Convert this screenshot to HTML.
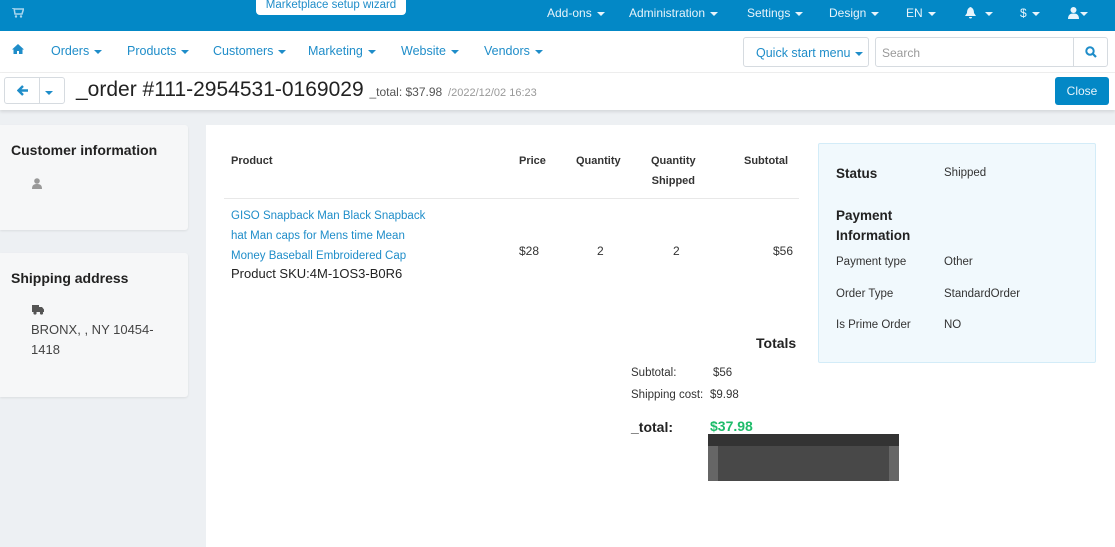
<!DOCTYPE html>
<html><head><meta charset="utf-8"><style>
*{box-sizing:border-box;margin:0;padding:0}
body{width:1115px;height:547px;overflow:hidden;background:#edf0f3;font-family:"Liberation Sans","DejaVu Sans",sans-serif;color:#333;position:relative;font-size:12px}
.abs{position:absolute;white-space:nowrap}
.top{position:absolute;left:0;top:0;width:1115px;height:31px;background:#0388c6}
.top .m{color:#e8f4fb;font-size:12px;top:6px}
.car{display:inline-block;border-left:4px solid transparent;border-right:4px solid transparent;border-top:4px solid currentColor;vertical-align:middle;margin-left:5px}
.nav{position:absolute;left:0;top:31px;width:1115px;height:42px;background:#fff;border-bottom:1px solid #eee}
.nav .m{color:#1f8dc9;font-size:12.5px;top:13px}
.tb{position:absolute;left:0;top:73px;width:1115px;height:37px;background:#fff;box-shadow:0 2px 3px rgba(0,0,0,.1)}
.card{position:absolute;left:0;width:188px;background:#f6f7f8;border-radius:0 3px 3px 0;box-shadow:0 1px 2px rgba(0,0,0,.08)}
.h{font-weight:bold;font-size:14px;color:#222}
.th{font-weight:bold;font-size:11px;color:#333;line-height:20px;text-align:center}
</style></head><body>
<div class="top">
<svg class="abs" style="left:12px;top:8px" width="12" height="10" viewBox="0 0 12 10"><path d="M0 0h2l1 6h7l1.5-5H3" fill="none" stroke="#a9d6ee" stroke-width="1.5"/><circle cx="4" cy="8.5" r="1.2" fill="#a9d6ee"/><circle cx="9" cy="8.5" r="1.2" fill="#a9d6ee"/></svg>
<div class="abs" style="left:256px;top:-4px;width:150px;height:19px;background:#fff;border-radius:4px;color:#1f8dc9;font-size:11.5px;text-align:center;padding-top:3px">Marketplace setup wizard</div>
<div class="abs m" style="left:547px">Add-ons<span class="car"></span></div>
<div class="abs m" style="left:629px">Administration<span class="car"></span></div>
<div class="abs m" style="left:747px">Settings<span class="car"></span></div>
<div class="abs m" style="left:829px">Design<span class="car"></span></div>
<div class="abs m" style="left:906px">EN<span class="car"></span></div>
<svg class="abs" style="left:965px;top:7px" width="11" height="12" viewBox="0 0 11 12"><path d="M5.5 0C3 1 2 3 2 6L0 9h11L9 6C9 3 8 1 5.5 0zM4 10h3a1.5 1.5 0 0 1-3 0z" fill="#e8f4fb"/></svg>
<div class="abs m" style="left:980px"><span class="car"></span></div>
<div class="abs m" style="left:1020px">$<span class="car"></span></div>
<svg class="abs" style="left:1068px;top:7px" width="11" height="12" viewBox="0 0 11 12"><circle cx="5.5" cy="3" r="3" fill="#e8f4fb"/><path d="M0 12c0-4 2-5.5 5.5-5.5S11 8 11 12z" fill="#e8f4fb"/></svg>
<div class="abs m" style="left:1075px"><span class="car"></span></div>
</div>
<div class="nav">
<svg class="abs" style="left:12px;top:13px" width="12" height="10" viewBox="0 0 12 10"><path d="M6 0L0 5.5h1.5V10h3.5V7h2v3h3.5V5.5H12z" fill="#1f8dc9"/></svg>
<div class="abs m" style="left:51px">Orders<span class="car"></span></div>
<div class="abs m" style="left:127px">Products<span class="car"></span></div>
<div class="abs m" style="left:213px">Customers<span class="car"></span></div>
<div class="abs m" style="left:308px">Marketing<span class="car"></span></div>
<div class="abs m" style="left:401px">Website<span class="car"></span></div>
<div class="abs m" style="left:484px">Vendors<span class="car"></span></div>
<div class="abs" style="left:743px;top:6px;width:126px;height:30px;border:1px solid #d6dbe0;border-radius:3px;color:#1f8dc9;font-size:12.5px;padding:8px 0 0 12px">Quick start menu<span class="car"></span></div>
<div class="abs" style="left:875px;top:6px;width:233px;height:30px;border:1px solid #d6dbe0;border-radius:3px;color:#999;padding:8px 0 0 6px">Search</div>
<div class="abs" style="left:1073px;top:6px;width:1px;height:30px;background:#d6dbe0"></div>
<svg class="abs" style="left:1085px;top:15px" width="12" height="12" viewBox="0 0 12 12"><circle cx="5" cy="5" r="3.7" fill="none" stroke="#1f8dc9" stroke-width="2"/><path d="M7.5 7.5l3.5 3.5" stroke="#1f8dc9" stroke-width="2.2"/></svg>
</div>
<div class="tb">
<div class="abs" style="left:4px;top:4px;width:61px;height:27px;border:1px solid #d6dbe0;border-radius:3px"></div>
<div class="abs" style="left:39px;top:4px;width:1px;height:27px;background:#d6dbe0"></div>
<svg class="abs" style="left:17px;top:12px" width="12" height="11" viewBox="0 0 12 11"><path d="M11 5.5H2M6 1L1.5 5.5 6 10" fill="none" stroke="#1f8dc9" stroke-width="2.4"/></svg>
<div class="abs" style="left:45px;top:12px;color:#1f8dc9"><span class="car" style="margin:0"></span></div>
<div class="abs" style="left:76px;top:5px;font-size:21px;color:#222">_order #111-2954531-0169029 <span style="font-size:12px;color:#555">_total: $37.98</span> <span style="font-size:11px;color:#999">/2022/12/02 16:23</span></div>
<div class="abs" style="left:1055px;top:4px;width:54px;height:28px;background:#0388c6;border-radius:3px;color:#e8f4fb;font-size:12px;text-align:center;padding-top:7px">Close</div>
</div>
<div class="card" style="top:125px;height:105px"><div class="abs h" style="left:11px;top:17px">Customer information</div>
<svg class="abs" style="left:32px;top:178px;top:53px" width="10" height="11" viewBox="0 0 10 11"><circle cx="5" cy="3" r="2.8" fill="#999"/><path d="M0 11c0-4 2-5 5-5s5 1 5 5z" fill="#999"/></svg></div>
<div class="card" style="top:253px;height:144px"><div class="abs h" style="left:11px;top:17px">Shipping address</div>
<svg class="abs" style="left:32px;top:52px" width="12" height="10" viewBox="0 0 12 10"><path d="M0 0h7v7H0zM7 2h3l2 2.5V7H7z" fill="#555"/><circle cx="3" cy="8" r="1.6" fill="#555"/><circle cx="9.5" cy="8" r="1.6" fill="#555"/></svg>
<div style="position:absolute;left:31px;top:67px;width:140px;font-size:13px;line-height:20px;color:#444">BRONX, , NY 10454-1418</div></div>
<div class="abs" style="left:206px;top:125px;width:909px;height:422px;background:#fff"></div>
<div class="abs th" style="left:231px;top:151px">Product</div>
<div class="abs th" style="left:519px;top:151px">Price</div>
<div class="abs th" style="left:576px;top:151px">Quantity</div>
<div class="abs th" style="left:651px;top:151px">Quantity<br>Shipped</div>
<div class="abs th" style="left:744px;top:151px">Subtotal</div>
<div class="abs" style="left:224px;top:198px;width:575px;height:1px;background:#e8e8e8"></div>
<div style="position:absolute;left:231px;top:206px;width:200px;font-size:11.5px;line-height:20px;color:#1f8dc9">GISO Snapback Man Black Snapback hat Man caps for Mens time Mean Money Baseball Embroidered Cap</div>
<div class="abs" style="left:231px;top:266px;font-size:13px;color:#222">Product SKU:4M-1OS3-B0R6</div>
<div class="abs" style="left:519px;top:244px">$28</div>
<div class="abs" style="left:597px;top:244px">2</div>
<div class="abs" style="left:673px;top:244px">2</div>
<div class="abs" style="left:773px;top:244px">$56</div>
<div class="abs" style="left:818px;top:143px;width:278px;height:220px;background:#f1f9fd;border:1px solid #d3ecf8;border-radius:2px"></div>
<div class="abs h" style="left:836px;top:166px;font-size:13.5px">Status</div>
<div class="abs" style="left:944px;top:167px;font-size:11.5px">Shipped</div>
<div class="abs h" style="left:836px;top:206px;font-size:13.5px;line-height:20px">Payment<br>Information</div>
<div class="abs" style="left:836px;top:256px;font-size:11.5px">Payment type</div><div class="abs" style="left:944px;top:256px;font-size:11.5px">Other</div>
<div class="abs" style="left:836px;top:288px;font-size:11.5px">Order Type</div><div class="abs" style="left:944px;top:288px;font-size:11.5px">StandardOrder</div>
<div class="abs" style="left:836px;top:319px;font-size:11.5px">Is Prime Order</div><div class="abs" style="left:944px;top:319px;font-size:11.5px">NO</div>
<div class="abs h" style="left:756px;top:335px">Totals</div>
<div class="abs" style="left:631px;top:367px;font-size:11.5px">Subtotal:</div><div class="abs" style="left:713px;top:367px;font-size:11.5px">$56</div>
<div class="abs" style="left:631px;top:389px;font-size:11.5px">Shipping cost:</div><div class="abs" style="left:710px;top:389px;font-size:11.5px">$9.98</div>
<div class="abs h" style="left:631px;top:419px">_total:</div>
<div class="abs" style="left:710px;top:418px;font-size:14px;font-weight:bold;color:#1ebc6a">$37.98</div>
<div class="abs" style="left:708px;top:434px;width:191px;height:47px;background:#484848;box-shadow:inset 0 12px 0 #333,inset 10px 0 0 #666,inset -10px 0 0 #666"></div>
</body></html>
